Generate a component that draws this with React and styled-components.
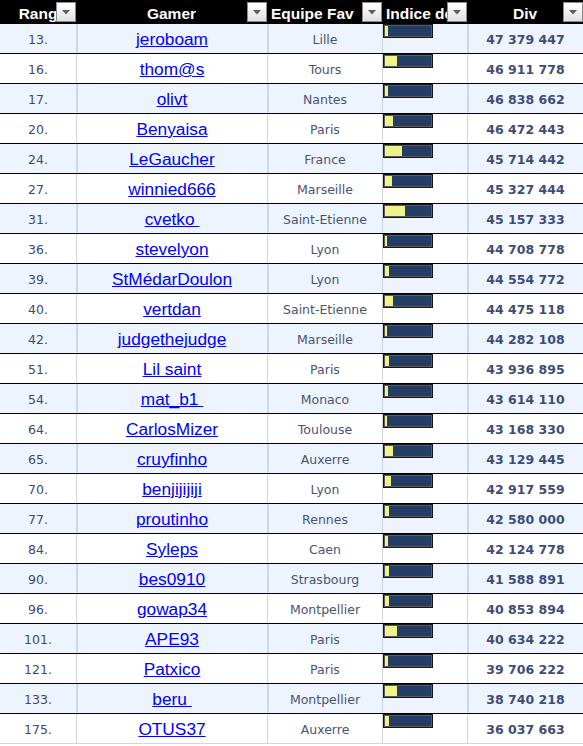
import React from "react";
import styled, { createGlobalStyle } from "styled-components";

const Global = createGlobalStyle`
  html, body { margin: 0; padding: 0; background: #ffffff; }
  body { font-family: "DejaVu Sans", Verdana, sans-serif; }
`;

const COLS = "76px 191px 115px 85px 116px";

const Table = styled.div`
  width: 583px;
  overflow: hidden;
`;

const HeaderRow = styled.div`
  display: grid;
  grid-template-columns: ${COLS};
  height: 24px;
  background: #000000;
`;

const HeadCell = styled.div`
  position: relative;
  overflow: hidden;
  white-space: nowrap;
  box-sizing: border-box;
  padding-top: 3px;
  color: #ffffff;
  font-family: "Liberation Sans", Arial, sans-serif;
  font-weight: bold;
  font-size: 15.5px;
  line-height: 21px;
  text-align: ${(p) => p.$align || "center"};
  padding-left: ${(p) => (p.$align === "left" ? "4px" : "0")};
`;

const FilterButton = styled.span`
  position: absolute;
  right: 0;
  top: 2px;
  width: 20px;
  height: 20px;
  box-sizing: border-box;
  border: 1px solid #8c8c8c;
  background: linear-gradient(#ffffff, #e2e2e2);
  display: flex;
  align-items: center;
  justify-content: center;
`;

const Row = styled.div`
  display: grid;
  grid-template-columns: ${COLS};
  height: 30px;
  box-sizing: border-box;
  border-bottom: 1px solid ${(p) => (p.$last ? "#c5d9f1" : "#000000")};
  background: ${(p) => (p.$alt ? "#eef4fe" : "#ffffff")};
`;

const Cell = styled.div`
  display: flex;
  align-items: center;
  justify-content: center;
  overflow: hidden;
  white-space: nowrap;
  padding-top: 2px;
  border-left: 1px solid ${(p) => (p.$alt ? "#c5d9f1" : "#d4d4d4")};
  box-shadow: ${(p) => (p.$alt ? "inset 1px 0 #c5d9f1" : "none")};
  &:first-child {
    border-left: none;
    box-shadow: none;
  }
`;

const BarCell = styled(Cell)`
  align-items: flex-start;
  justify-content: flex-start;
  padding-top: 0;
  box-shadow: none;
`;

const Rank = styled.span`
  font-family: "DejaVu Sans", Verdana, sans-serif;
  font-size: 12.5px;
  color: #3d4a70;
`;

const GamerLink = styled.a`
  font-family: "Liberation Sans", Arial, sans-serif;
  font-size: 17.3px;
  color: #0000ff;
  text-decoration: underline;
  white-space: pre;
`;

const City = styled.span`
  font-family: "DejaVu Sans", Verdana, sans-serif;
  font-size: 12.5px;
  color: #4a5470;
`;

const Amount = styled.span`
  font-family: "DejaVu Sans", Verdana, sans-serif;
  font-weight: bold;
  font-size: 12.5px;
  color: #3e4d78;
`;

const Bar = styled.div`
  width: 50px;
  height: 14px;
  box-sizing: border-box;
  border: 1px solid #151515;
  background: #5a5a5a;
  padding: 1px;
  display: flex;
`;

const BarFill = styled.div`
  flex: 1;
  display: flex;
  background: #243d64;
`;

const BarYellow = styled.div`
  height: 100%;
  background: #eef38a;
`;

const Triangle = () => (
  <svg width="8" height="5" viewBox="0 0 8 5">
    <path d="M0 0 H8 L4 4.5 Z" fill="#5f5f5f" />
  </svg>
);

const rows = [
  [13, "jeroboam", "Lille", 3, "47 379 447"],
  [16, "thom@s", "Tours", 12, "46 911 778"],
  [17, "olivt", "Nantes", 3, "46 838 662"],
  [20, "Benyaisa", "Paris", 8, "46 472 443"],
  [24, "LeGaucher", "France", 17, "45 714 442"],
  [27, "winnied666", "Marseille", 7, "45 327 444"],
  [31, "cvetko ", "Saint-Etienne", 20, "45 157 333"],
  [36, "stevelyon", "Lyon", 2, "44 708 778"],
  [39, "StMédarDoulon", "Lyon", 4, "44 554 772"],
  [40, "vertdan", "Saint-Etienne", 8, "44 475 118"],
  [42, "judgethejudge", "Marseille", 2, "44 282 108"],
  [51, "Lil saint", "Paris", 4, "43 936 895"],
  [54, "mat_b1 ", "Monaco", 3, "43 614 110"],
  [64, "CarlosMizer", "Toulouse", 2, "43 168 330"],
  [65, "cruyfinho", "Auxerre", 8, "43 129 445"],
  [70, "benjijijiji", "Lyon", 6, "42 917 559"],
  [77, "proutinho", "Rennes", 4, "42 580 000"],
  [84, "Syleps", "Caen", 3, "42 124 778"],
  [90, "bes0910", "Strasbourg", 4, "41 588 891"],
  [96, "gowap34", "Montpellier", 4, "40 853 894"],
  [101, "APE93", "Paris", 12, "40 634 222"],
  [121, "Patxico", "Paris", 3, "39 706 222"],
  [133, "beru ", "Montpellier", 12, "38 740 218"],
  [175, "OTUS37", "Auxerre", 4, "36 037 663"],
];

const headers = [
  { label: "Rang" },
  { label: "Gamer" },
  { label: "Equipe Fav", align: "left" },
  { label: "Indice de forme", align: "left" },
  { label: "Div" },
];

export default function App() {
  return (
    <>
      <Global />
      <Table>
        <HeaderRow>
          {headers.map((h) => (
            <HeadCell key={h.label} $align={h.align}>
              {h.label}
              <FilterButton>
                <Triangle />
              </FilterButton>
            </HeadCell>
          ))}
        </HeaderRow>
        {rows.map(([rank, gamer, city, form, div], i) => {
          const alt = i % 2 === 0;
          return (
            <Row key={rank} $alt={alt} $last={i === rows.length - 1}>
              <Cell $alt={alt}>
                <Rank>{rank}.</Rank>
              </Cell>
              <Cell $alt={alt}>
                <GamerLink href="#">{gamer}</GamerLink>
              </Cell>
              <Cell $alt={alt}>
                <City>{city}</City>
              </Cell>
              <BarCell $alt={alt}>
                <Bar>
                  <BarFill>
                    <BarYellow style={{ width: `${form}px` }} />
                  </BarFill>
                </Bar>
              </BarCell>
              <Cell $alt={alt}>
                <Amount>{div}</Amount>
              </Cell>
            </Row>
          );
        })}
      </Table>
    </>
  );
}
